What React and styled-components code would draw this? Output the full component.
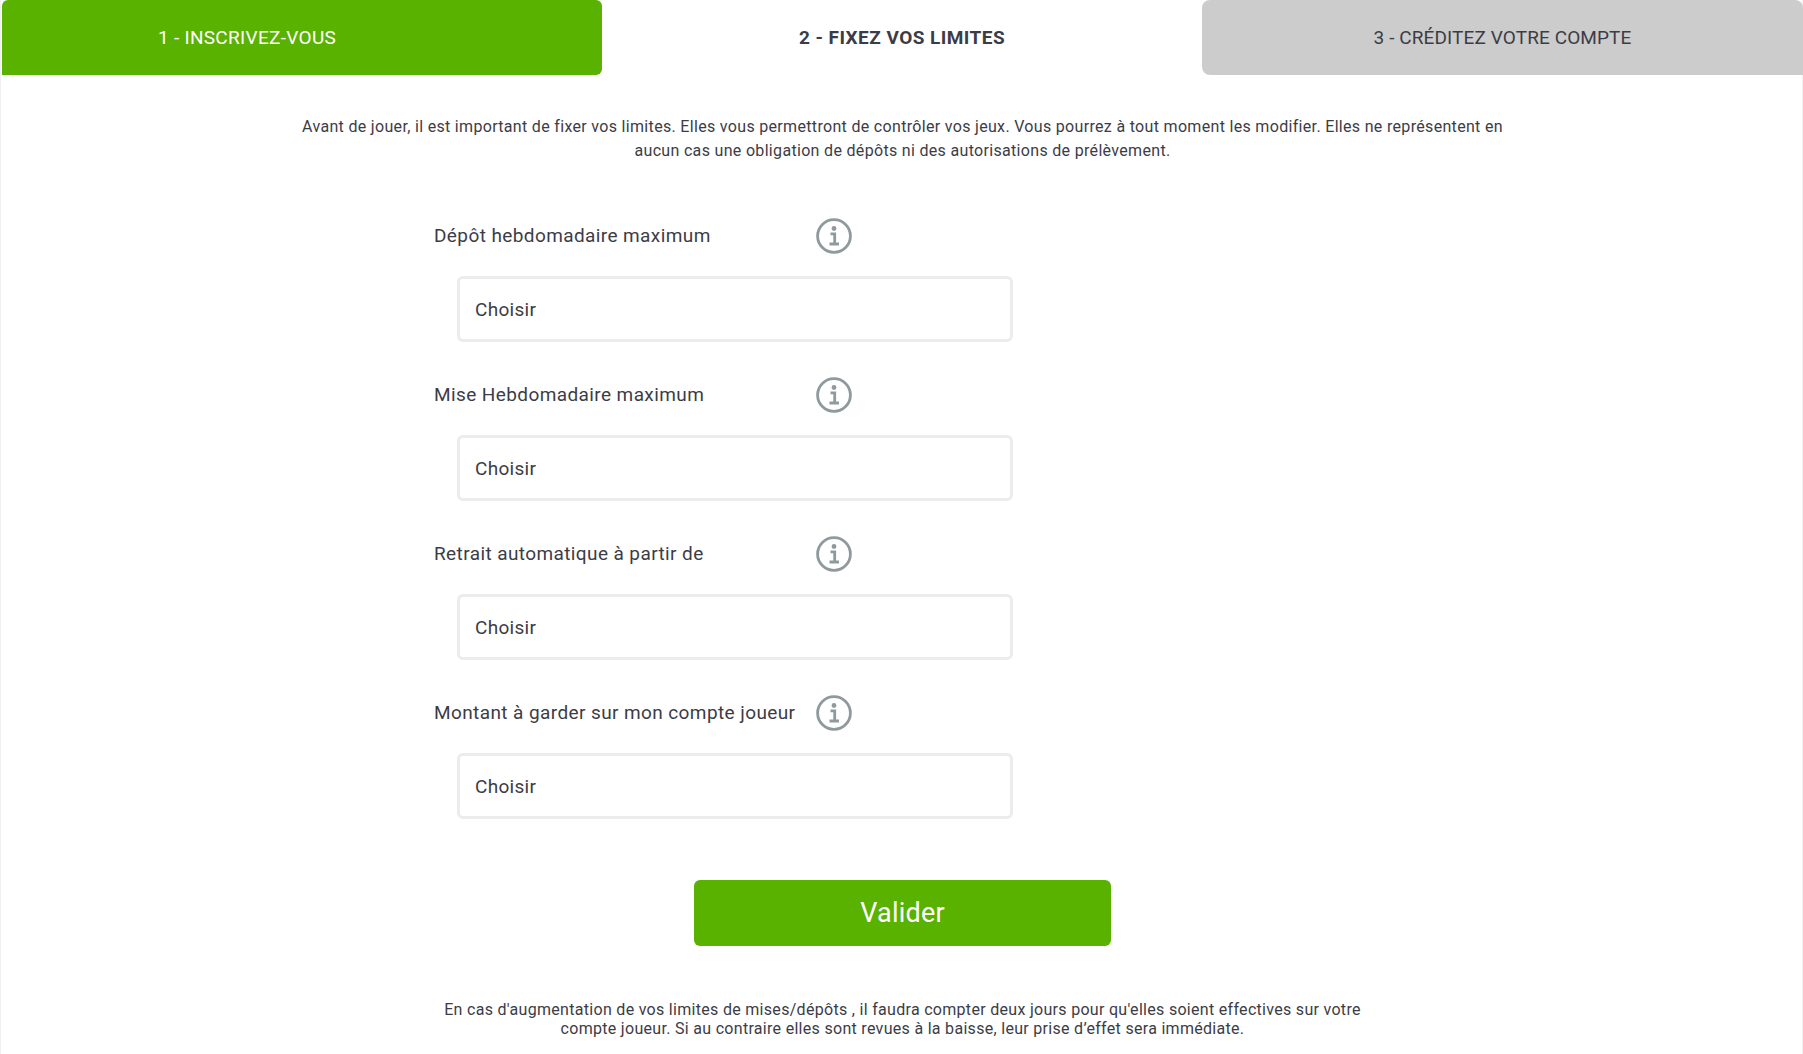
import React from 'react'
import styled, { createGlobalStyle } from 'styled-components'

const limits = [
  'Dépôt hebdomadaire maximum',
  'Mise Hebdomadaire maximum',
  'Retrait automatique à partir de',
  'Montant à garder sur mon compte joueur',
]

function InfoIcon() {
  return (
    <InfoSvg width="36" height="36" viewBox="0 0 36 36" fill="none">
      <circle cx="18" cy="18" r="16.4" stroke="#8f9a9c" strokeWidth="2.8" />
      <circle cx="18" cy="10.5" r="2.4" fill="#8f9a9c" />
      <path d="M14.5 15.8h4.2v10M13.5 26h9.5" stroke="#8f9a9c" strokeWidth="2.8" />
    </InfoSvg>
  )
}

export default function App() {
  return (
    <>
      <GlobalStyle />
      <Page>
        <Tabs>
          <Tab $variant="done">1 - INSCRIVEZ-VOUS</Tab>
          <Tab $variant="active">2 - FIXEZ VOS LIMITES</Tab>
          <Tab $variant="next">3 - CRÉDITEZ VOTRE COMPTE</Tab>
        </Tabs>
        <Body>
          <Intro>
            Avant de jouer, il est important de fixer vos limites. Elles vous permettront de contrôler vos jeux. Vous pourrez à tout moment les modifier. Elles ne représentent en<br />
            aucun cas une obligation de dépôts ni des autorisations de prélèvement.
          </Intro>
          <Form>
            {limits.map((label) => (
              <Field key={label}>
                <LabelRow>
                  <Label>{label}</Label>
                  <InfoIcon />
                </LabelRow>
                <Select>Choisir</Select>
              </Field>
            ))}
          </Form>
          <Submit>Valider</Submit>
          <Note>
            En cas d'augmentation de vos limites de mises/dépôts , il faudra compter deux jours pour qu'elles soient effectives sur votre<br />
            compte joueur. Si au contraire elles sont revues à la baisse, leur prise d’effet sera immédiate.
          </Note>
        </Body>
      </Page>
    </>
  )
}

const GlobalStyle = createGlobalStyle`
  html, body {
    margin: 0;
    background: #fff;
    overflow: hidden;
  }
  body {
    font-family: "Roboto", "Liberation Sans", sans-serif;
    color: #3c3c46;
  }
`

const Page = styled.div`
  height: 1054px;
  padding-left: 2px;
  box-sizing: border-box;
  border-left: 1px solid #f0f0f0;
  border-right: 1px solid #f0f0f0;
`

const Tabs = styled.div`
  display: flex;
  margin-left: -1px;
  margin-right: -1px;
`

const tabStyles = {
  done: `
    flex: 0 0 600px;
    padding-right: 110px;
    background: #5ab200;
    color: #fff;
    border-radius: 6px 6px 6px 0;
    letter-spacing: 0.3px;
  `,
  active: `
    flex: 0 0 600px;
    background: #fff;
    font-weight: 700;
    letter-spacing: 0.45px;
  `,
  next: `
    flex: 1;
    background: #cccccc;
    border-radius: 8px 8px 0 8px;
    letter-spacing: 0.1px;
  `,
}

const Tab = styled.div`
  height: 75px;
  box-sizing: border-box;
  display: flex;
  align-items: center;
  justify-content: center;
  font-size: 19px;
  ${(p) => tabStyles[p.$variant]}
`

const Body = styled.div`
  display: flex;
  flex-direction: column;
  align-items: center;
`

const Intro = styled.p`
  margin: 40px 0 0;
  font-size: 16px;
  letter-spacing: 0.32px;
  line-height: 24px;
  text-align: center;
  white-space: nowrap;
`

const Form = styled.div`
  align-self: flex-start;
  margin: 54px 0 0 431px;
  display: flex;
  flex-direction: column;
  gap: 34px;
`

const Field = styled.div`
  display: flex;
  flex-direction: column;
`

const LabelRow = styled.div`
  display: grid;
  grid-template-columns: 382px 36px;
  height: 36px;
  align-items: center;
`

const InfoSvg = styled.svg`
  display: block;
  align-self: start;
  margin-top: 1px;
`

const Label = styled.span`
  font-size: 19px;
  letter-spacing: 0.4px;
  white-space: nowrap;
`

const Select = styled.div`
  margin: 23px 0 0 23px;
  width: 556px;
  height: 66px;
  box-sizing: border-box;
  border: 3px solid #ececec;
  border-radius: 6px;
  padding-left: 15px;
  display: flex;
  align-items: center;
  font-size: 19px;
  letter-spacing: 0.3px;
`

const Submit = styled.button`
  margin-top: 61px;
  width: 417px;
  height: 66px;
  border: 0;
  border-radius: 6px;
  background: #5ab200;
  color: #fff;
  font-family: inherit;
  font-size: 27px;
  letter-spacing: 0.2px;
`

const Note = styled.p`
  margin: 54px 0 0;
  font-size: 16px;
  letter-spacing: 0.3px;
  line-height: 19px;
  text-align: center;
  white-space: nowrap;
`
